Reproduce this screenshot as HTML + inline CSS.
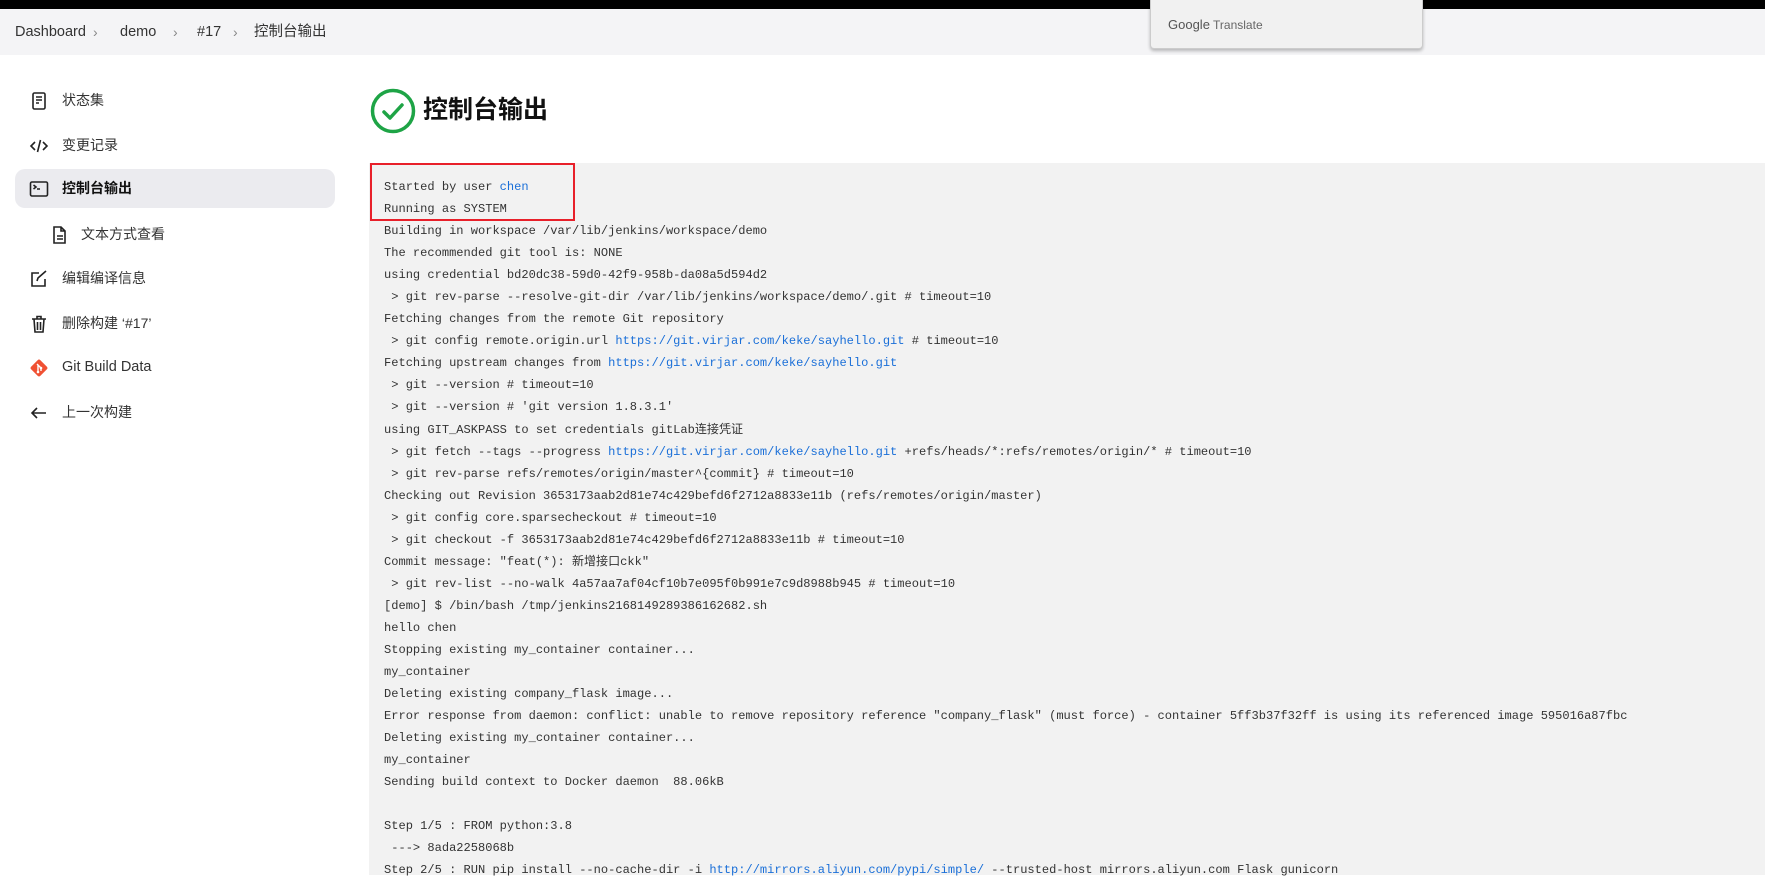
<!DOCTYPE html>
<html><head><meta charset="utf-8">
<style>
*{margin:0;padding:0;box-sizing:border-box}
body{width:1765px;height:875px;overflow:hidden;background:#fff;font-family:"Liberation Sans","Noto Sans CJK SC",sans-serif;color:#1f1f1f;position:relative}
.top{position:absolute;left:0;top:0;width:1765px;height:9px;background:#000}
.bc{position:absolute;left:0;top:9px;width:1765px;height:46px;background:#f4f4f6}
.bc span{position:absolute;top:14px;font-size:14.5px;color:#333;line-height:18px}
.bc .sep{color:#888;font-size:14px}
.gt{position:absolute;left:1150px;top:0;width:273px;height:49px;background:#f1f1f1;border:1px solid #ccc;border-top:none;border-radius:0 0 4px 4px;box-shadow:0 2px 3px rgba(0,0,0,.25)}
.gt span{position:absolute;left:17px;top:17px;font-size:12px;color:#666}
.side .it{position:absolute;left:15px;width:320px;height:39px;border-radius:10px}
.side .it.act{background:#ebebef}
.side .ic{position:absolute;left:14px;top:10px;width:20px;height:20px}
.side .tx{position:absolute;left:47px;top:10px;font-size:14px;color:#333;line-height:19px}
.side .act .tx{font-weight:bold;color:#111}
h1{position:absolute;left:423px;top:94px;font-size:25px;font-weight:bold;color:#111;font-family:"Liberation Sans","Noto Sans CJK SC",sans-serif;line-height:32px}
.con{position:absolute;left:369px;top:163px;width:1396px;height:712px;background:#f2f2f2}
pre{position:absolute;left:384px;top:176px;font-family:"Liberation Mono","Noto Sans CJK SC",monospace;font-size:12.05px;line-height:22.05px;color:#333}
pre a{color:#1a6fd8;text-decoration:none}
.red{position:absolute;left:370px;top:163px;width:205px;height:58px;border:2px solid #e8202a}
</style></head><body>
<div class="top"></div>
<div class="bc">
<span style="left:15px">Dashboard</span><span class="sep" style="left:93px">›</span>
<span style="left:120px">demo</span><span class="sep" style="left:173px">›</span>
<span style="left:197px">#17</span><span class="sep" style="left:233px">›</span>
<span style="left:254px">控制台输出</span>
</div>
<div class="gt"><span><b style="font-weight:normal;font-size:13px;color:#555">Google</b> Translate</span></div>

<div class="side">
<div class="it" style="top:81px"><svg class="ic" viewBox="0 0 20 20" fill="none" stroke="#222" stroke-width="1.6"><rect x="4" y="2" width="12" height="16" rx="1.5"/><path d="M7 6h6M7 9h6M7 12h3"/></svg><span class="tx">状态集</span></div>
<div class="it" style="top:126px"><svg class="ic" viewBox="0 0 20 20" fill="none" stroke="#222" stroke-width="1.6"><path d="M6 6l-4 4 4 4M14 6l4 4-4 4M11.5 4l-3 12"/></svg><span class="tx">变更记录</span></div>
<div class="it act" style="top:169px"><svg class="ic" viewBox="0 0 20 20" fill="none" stroke="#222" stroke-width="1.6"><rect x="1.5" y="3" width="17" height="14" rx="1.5"/><path d="M4.5 6l2.5 2-2.5 2M8 10h3"/></svg><span class="tx">控制台输出</span></div>
<div class="it" style="top:215px"><svg class="ic" style="left:34px" viewBox="0 0 20 20" fill="none" stroke="#222" stroke-width="1.6"><path d="M5 2h7l4 4v12H5z M12 2v4h4M8 11h6M8 14h6"/></svg><span class="tx" style="left:66px">文本方式查看</span></div>
<div class="it" style="top:259px"><svg class="ic" viewBox="0 0 20 20" fill="none" stroke="#222" stroke-width="1.6"><path d="M10 4H3v13h13v-7M8 12l1-3 8-7"/></svg><span class="tx">编辑编译信息</span></div>
<div class="it" style="top:304px"><svg class="ic" viewBox="0 0 20 20" fill="none" stroke="#222" stroke-width="1.6"><path d="M3 5h14M8 5V2.5h4V5M5 5l1 13h8l1-13M8.5 8v8M11.5 8v8"/></svg><span class="tx">删除构建 ‘#17’</span></div>
<div class="it" style="top:348px"><svg class="ic" viewBox="0 0 20 20"><rect x="3.5" y="3.5" width="13" height="13" rx="2" transform="rotate(45 10 10)" fill="#f05133"/><path d="M8 6l4 4M9 7v7M12 10v3" stroke="#fff" stroke-width="1.4"/><circle cx="9" cy="14" r="1.3" fill="#fff"/><circle cx="12" cy="10" r="1.3" fill="#fff"/></svg><span class="tx" style="font-size:14.5px">Git Build Data</span></div>
<div class="it" style="top:393px"><svg class="ic" viewBox="0 0 20 20" fill="none" stroke="#222" stroke-width="1.6"><path d="M17 10H3M8 5l-5 5 5 5"/></svg><span class="tx">上一次构建</span></div>
</div>

<svg style="position:absolute;left:370px;top:88px" width="46" height="46" viewBox="0 0 46 46" fill="none"><circle cx="23" cy="23" r="20.5" stroke="#1ea446" stroke-width="3.5"/><path d="M14 24l6 6 12-13" stroke="#1ea446" stroke-width="3.5" stroke-linecap="round" stroke-linejoin="round"/></svg>
<h1>控制台输出</h1>

<div class="con"></div>
<pre>Started by user <a>chen</a>
Running as SYSTEM
Building in workspace /var/lib/jenkins/workspace/demo
The recommended git tool is: NONE
using credential bd20dc38-59d0-42f9-958b-da08a5d594d2
 &gt; git rev-parse --resolve-git-dir /var/lib/jenkins/workspace/demo/.git # timeout=10
Fetching changes from the remote Git repository
 &gt; git config remote.origin.url <a>https://git.virjar.com/keke/sayhello.git</a> # timeout=10
Fetching upstream changes from <a>https://git.virjar.com/keke/sayhello.git</a>
 &gt; git --version # timeout=10
 &gt; git --version # 'git version 1.8.3.1'
using GIT_ASKPASS to set credentials gitLab连接凭证
 &gt; git fetch --tags --progress <a>https://git.virjar.com/keke/sayhello.git</a> +refs/heads/*:refs/remotes/origin/* # timeout=10
 &gt; git rev-parse refs/remotes/origin/master^{commit} # timeout=10
Checking out Revision 3653173aab2d81e74c429befd6f2712a8833e11b (refs/remotes/origin/master)
 &gt; git config core.sparsecheckout # timeout=10
 &gt; git checkout -f 3653173aab2d81e74c429befd6f2712a8833e11b # timeout=10
Commit message: "feat(*): 新增接口ckk"
 &gt; git rev-list --no-walk 4a57aa7af04cf10b7e095f0b991e7c9d8988b945 # timeout=10
[demo] $ /bin/bash /tmp/jenkins2168149289386162682.sh
hello chen
Stopping existing my_container container...
my_container
Deleting existing company_flask image...
Error response from daemon: conflict: unable to remove repository reference "company_flask" (must force) - container 5ff3b37f32ff is using its referenced image 595016a87fbc
Deleting existing my_container container...
my_container
Sending build context to Docker daemon  88.06kB

Step 1/5 : FROM python:3.8
 ---&gt; 8ada2258068b
Step 2/5 : RUN pip install --no-cache-dir -i <a>http://mirrors.aliyun.com/pypi/simple/</a> --trusted-host mirrors.aliyun.com Flask gunicorn</pre>
<div class="red"></div>
</body></html>
